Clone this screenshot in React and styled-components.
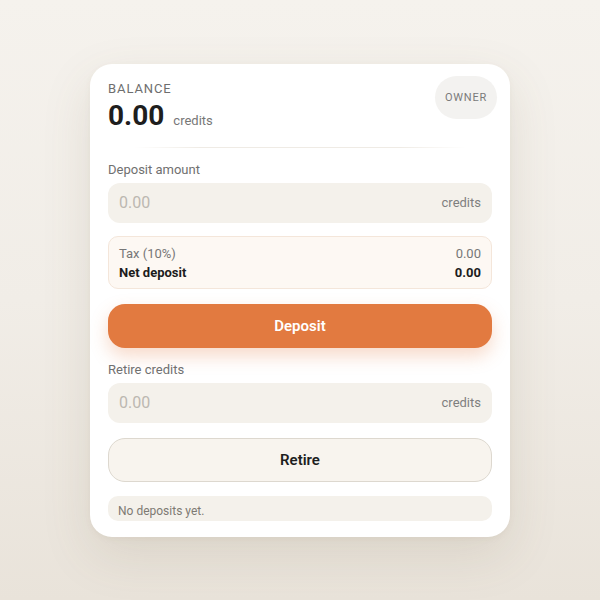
import styled, { createGlobalStyle } from "styled-components";

const GlobalStyle = createGlobalStyle`
  * { box-sizing: border-box; }
  html, body { margin: 0; padding: 0; }
  body {
    font-family: Roboto, "Liberation Sans", sans-serif;
    background: linear-gradient(180deg, #f5f2ed 0%, #f1ede7 50%, #e9e3da 100%);
    min-height: 100vh;
  }
`;

export default function App() {
  return (
    <>
      <GlobalStyle />
      <Page>
        <Card>
          <Header>
            <div>
              <Caption>BALANCE</Caption>
              <BalanceLine>
                <Big>0.00</Big>
                <Unit>credits</Unit>
              </BalanceLine>
            </div>
            <Pill>OWNER</Pill>
          </Header>
          <Divider />

          <Label>Deposit amount</Label>
          <Field>
            <Input placeholder="0.00" />
            <Suffix>credits</Suffix>
          </Field>

          <Summary>
            <SummaryRow>
              <span>Tax (10%)</span>
              <span>0.00</span>
            </SummaryRow>
            <SummaryRow $strong>
              <span>Net deposit</span>
              <span>0.00</span>
            </SummaryRow>
          </Summary>

          <Button $variant="primary">Deposit</Button>

          <Label>Retire credits</Label>
          <Field>
            <Input placeholder="0.00" />
            <Suffix>credits</Suffix>
          </Field>

          <Button $variant="secondary">Retire</Button>

          <History>No deposits yet.</History>
        </Card>
      </Page>
    </>
  );
}

const Page = styled.div`
  min-height: 100vh;
  display: flex;
  align-items: center;
  justify-content: center;
`;

const Card = styled.div`
  width: 420px;
  background: #fff;
  border-radius: 22px;
  padding: 17px 18px 16px;
  display: flex;
  flex-direction: column;
  box-shadow: 0 18px 50px rgba(110, 90, 60, 0.13), 0 2px 6px rgba(110, 90, 60, 0.05);
`;

const Header = styled.div`
  display: flex;
  justify-content: space-between;
  align-items: flex-start;
`;

const Caption = styled.div`
  font-size: 13px;
  line-height: 16px;
  letter-spacing: 0.9px;
  color: #6e6e6e;
`;

const BalanceLine = styled.div`
  display: flex;
  align-items: baseline;
  gap: 9px;
  margin-top: 2px;
`;

const Big = styled.span`
  font-size: 28px;
  line-height: 33px;
  font-weight: 700;
  color: #1e1e1e;
`;

const Unit = styled.span`
  font-size: 13px;
  color: #777;
`;

const Pill = styled.div`
  margin: -5px -5px 0 0;
  height: 43px;
  width: 62px;
  display: flex;
  align-items: center;
  justify-content: center;
  border-radius: 22px;
  background: #f3f2f0;
  font-size: 11px;
  letter-spacing: 0.8px;
  color: #7a7a7a;
`;

const Divider = styled.div`
  height: 1px;
  margin: 15px 26px 14px;
  background: linear-gradient(90deg, rgba(235, 230, 222, 0), #efebe5 20%, #efebe5 80%, rgba(235, 230, 222, 0));
`;

const Label = styled.div`
  font-size: 13px;
  line-height: 16px;
  color: #707070;
  margin-bottom: 5px;
`;

const Field = styled.div`
  height: 40px;
  border-radius: 12px;
  background: #f4f1eb;
  display: flex;
  align-items: center;
  padding: 0 11px;
  gap: 8px;
`;

const Input = styled.input`
  flex: 1;
  min-width: 0;
  border: none;
  outline: none;
  background: transparent;
  font-family: inherit;
  font-size: 16px;
  color: #333;
  padding: 0;

  &::placeholder {
    color: #bcb8b1;
  }
`;

const Suffix = styled.span`
  font-size: 13px;
  color: #7f7f7f;
`;

const Summary = styled.div`
  margin-top: 13px;
  border: 1px solid #f4e6da;
  background: #fdf8f3;
  border-radius: 10px;
  padding: 7px 10px 6px;
  display: flex;
  flex-direction: column;
`;

const SummaryRow = styled.div`
  display: flex;
  justify-content: space-between;
  font-size: 13px;
  line-height: 19px;
  color: ${(p) => (p.$strong ? "#1c1c1c" : "#777")};
  font-weight: ${(p) => (p.$strong ? 700 : 400)};
`;

const Button = styled.button`
  width: 100%;
  height: 44px;
  border-radius: 17px;
  font-family: inherit;
  font-size: 15px;
  font-weight: 600;
  cursor: pointer;
  margin: 15px 0 14px;
  ${(p) =>
    p.$variant === "primary"
      ? `
    background: #e27a40;
    color: #fff;
    border: none;
    box-shadow: 0 8px 18px rgba(226, 122, 64, 0.28);
  `
      : `
    background: #f8f4ee;
    color: #1e1e1e;
    border: 1px solid #ddd8cf;
  `}
`;

const History = styled.div`
  height: 25px;
  border-radius: 10px;
  background: #f4f1eb;
  padding: 7px 10px 0;
  font-size: 12px;
  line-height: 16px;
  color: #7e7a73;
  overflow: hidden;
`;
